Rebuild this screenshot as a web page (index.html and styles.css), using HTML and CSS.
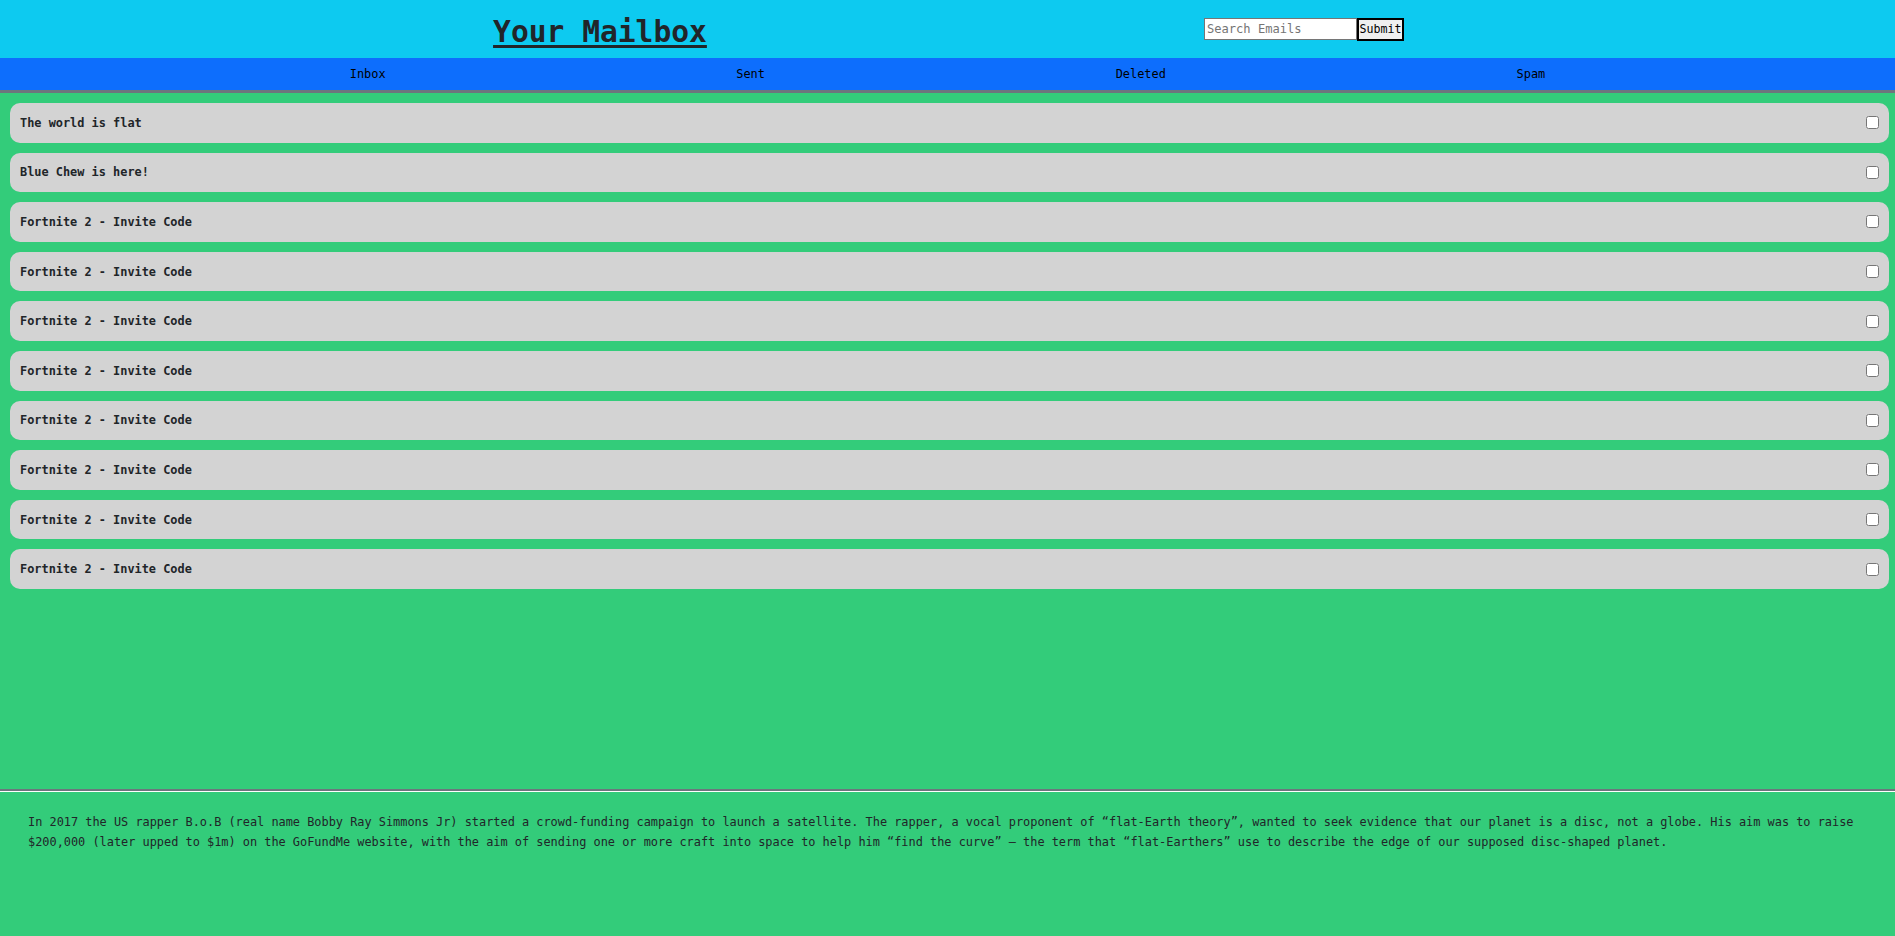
FILE: index.html
```html
<!DOCTYPE html>
<html lang="en">
<head>
<meta charset="utf-8">
<title>Your Mailbox</title>
<link rel="stylesheet" href="styles.css">
</head>
<body>
<header class="top">
  <h1 class="title">Your Mailbox</h1>
  <form class="search" onsubmit="return false">
    <input class="search-input" type="text" placeholder="Search Emails">
    <button class="search-btn" type="submit">Submit</button>
  </form>
</header>
<nav class="tabs">
  <span class="tab">Inbox</span>
  <span class="tab">Sent</span>
  <span class="tab">Deleted</span>
  <span class="tab">Spam</span>
</nav>
<main class="mail">
  <div class="item"><span class="subject">The world is flat</span><input class="check" type="checkbox"></div>
  <div class="item"><span class="subject">Blue Chew is here!</span><input class="check" type="checkbox"></div>
  <div class="item"><span class="subject">Fortnite 2 - Invite Code</span><input class="check" type="checkbox"></div>
  <div class="item"><span class="subject">Fortnite 2 - Invite Code</span><input class="check" type="checkbox"></div>
  <div class="item"><span class="subject">Fortnite 2 - Invite Code</span><input class="check" type="checkbox"></div>
  <div class="item"><span class="subject">Fortnite 2 - Invite Code</span><input class="check" type="checkbox"></div>
  <div class="item"><span class="subject">Fortnite 2 - Invite Code</span><input class="check" type="checkbox"></div>
  <div class="item"><span class="subject">Fortnite 2 - Invite Code</span><input class="check" type="checkbox"></div>
  <div class="item"><span class="subject">Fortnite 2 - Invite Code</span><input class="check" type="checkbox"></div>
  <div class="item"><span class="subject">Fortnite 2 - Invite Code</span><input class="check" type="checkbox"></div>
</main>
<footer class="preview">
  <p class="preview-text">In 2017 the US rapper B.o.B (real name Bobby Ray Simmons Jr) started a crowd-funding campaign to launch a satellite. The rapper, a vocal proponent of “flat-Earth theory”, wanted to seek evidence that our planet is a disc, not a globe. His aim was to raise $200,000 (later upped to $1m) on the GoFundMe website, with the aim of sending one or more craft into space to help him “find the curve” – the term that “flat-Earthers” use to describe the edge of our supposed disc-shaped planet.</p>
</footer>
</body>
</html>
```
FILE: styles.css
```css
* {
  box-sizing: border-box;
}

html, body {
  margin: 0;
  padding: 0;
}

body {
  font-family: "DejaVu Sans Mono", "Liberation Mono", monospace;
  font-size: 11.9px;
  color: #212529;
  background: #33cc7a;
  height: 936px;
  overflow: hidden;
}

.top {
  height: 58px;
  background: #0dcaf0;
  display: flex;
  justify-content: space-evenly;
  align-items: center;
}

.title {
  margin: 6px 0 0 2px;
  font-size: 29.6px;
  font-weight: bold;
  line-height: normal;
  text-decoration: underline;
  text-decoration-thickness: 3px;
  text-underline-offset: 3px;
  color: #212529;
}

.search {
  display: flex;
  align-items: center;
  margin: 0 0 0 6px;
}

.search-input {
  width: 153px;
  height: 22px;
  padding: 1px 2px;
  border: 1px solid #767676;
  background: #fff;
  font-family: "DejaVu Sans Mono", monospace;
  font-size: 12.1px;
  color: #212529;
  margin: 0;
}

.search-input::placeholder {
  color: #757575;
}

.search-btn {
  width: 47px;
  height: 23px;
  padding: 0;
  margin: 0;
  border: 2px solid #000;
  background: #efefef;
  font-family: "DejaVu Sans Mono", monospace;
  font-size: 11.6px;
  color: #000;
}

.tabs {
  height: 35px;
  background: #0d6efd;
  border-bottom: 3px solid #6c757d;
  display: flex;
  justify-content: space-evenly;
  align-items: center;
  color: #000;
}

.tab {
  padding: 0 1px;
}

.mail {
  height: 696px;
  padding: 10px 6px 0 10px;
  display: flex;
  flex-direction: column;
  gap: 10px;
}

.item {
  height: 39.6px;
  background: #d3d3d3;
  border-radius: 10px;
  padding: 0 10px;
  display: flex;
  align-items: center;
  justify-content: space-between;
  font-weight: bold;
  flex: none;
}

.check {
  width: 13px;
  height: 13px;
  margin: 0;
}

.preview {
  border-top: 2px solid #6c757d;
  box-shadow: inset 0 1px 0 #ffffff;
  padding: 21px 28px 0 28px;
  height: 147px;
}

.preview-text {
  margin: 0;
  line-height: 20px;
}
```
